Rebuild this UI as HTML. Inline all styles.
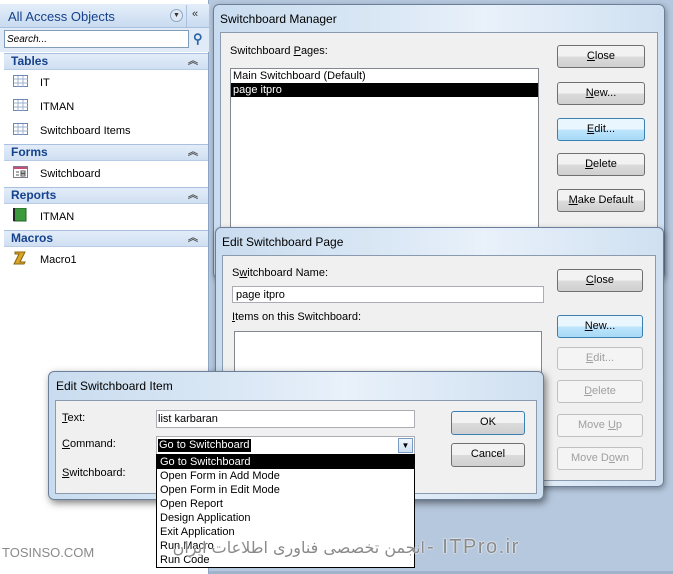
<!DOCTYPE html>
<html><head><meta charset="utf-8"><style>
*{box-sizing:border-box;margin:0;padding:0}
body{width:673px;height:574px;overflow:hidden;background:#b6c8de;font-family:"Liberation Sans",sans-serif;font-size:11px;color:#000;position:relative}
.a{position:absolute;white-space:nowrap}
.nav{left:0;top:0;width:209px;height:574px;background:#fff;border-right:1px solid #8ea6c6}
.sec{left:4px;width:204px;height:17px;background:linear-gradient(#e3edf9,#cfdff2);border-top:1px solid #a9c0df;border-bottom:1px solid #b9cce6;color:#15428b;font-weight:bold;font-size:12px;padding-left:7px;line-height:15px}
.sec span{position:absolute;right:10px;font-size:10px;color:#555}
.it{left:40px;font-size:11px}
.dlg{background:linear-gradient(90deg,#c9dcef,#dbe8f5 40%,#e9f1fa 60%,#cfe0f1);border:1px solid #6b7f99;border-radius:6px;box-shadow:1px 2px 6px rgba(0,0,0,.35)}
.pan{background:#f0f0f0;border:1px solid #8a9bb0}
.btn{width:88px;height:23px;border:1px solid #707070;border-radius:3px;background:linear-gradient(#f2f2f2 50%,#dcdcdc 50%,#cfcfcf);text-align:center;line-height:21px;font-size:11px}
.btn.h{border-color:#3c7fb1;background:linear-gradient(#eaf6fd 50%,#bee6fd 50%,#a7d9f5)}
.btn.d{color:#a0a0a0;border-color:#c0c0c0;background:#f4f4f4}
.inp{background:#fff;border:1px solid #abadb3}
u{text-decoration:underline}
.wm{color:rgba(125,125,125,.9);text-shadow:0 0 1px #fff,0 0 2px #fff;z-index:5}
</style></head><body>
<div class="a nav"></div>
<div class="a" style="left:0;top:4px;width:209px;height:24px;background:linear-gradient(#e4eef9,#c9dbf0);border-bottom:1px solid #a9c0df"></div>
<div class="a" style="left:8px;top:9px;font-size:13px;color:#15428b">All Access Objects</div>
<div class="a" style="left:170px;top:9px;width:13px;height:13px;border-radius:50%;background:#dfe8f3;border:1px solid #8fa6c4;font-size:7px;text-align:center;line-height:11px;color:#333">▼</div>
<div class="a" style="left:186px;top:5px;width:1px;height:22px;background:#a9c0df"></div>
<div class="a" style="left:192px;top:8px;font-size:11px;color:#333">«</div>
<div class="a" style="left:0;top:28px;width:209px;height:24px;background:#e0ebf7"></div>
<div class="a inp" style="left:4px;top:30px;width:185px;height:18px;border-color:#7f9db9"></div>
<div class="a" style="left:7px;top:34px;font-style:italic;font-size:10px;color:#000">Search...</div>
<div class="a" style="left:193px;top:31px;font-size:13px;color:#2a64a8;font-weight:bold">⚲</div>
<div class="a sec" style="top:53px">Tables<span>︽</span></div>
<div class="a sec" style="top:144px">Forms<span>︽</span></div>
<div class="a sec" style="top:187px">Reports<span>︽</span></div>
<div class="a sec" style="top:230px">Macros<span>︽</span></div>
<svg class="a" style="left:13px;top:75px" width="16" height="64"><g fill="#fff" stroke="#6a87b5"><rect x=".5" y=".5" width="14" height="11"/><rect x=".5" y="24.5" width="14" height="11"/><rect x=".5" y="48.5" width="14" height="11"/></g><g stroke="#9eb2d0"><path d="M1 4h14M1 8h14M5 1v11M10 1v11M1 28h14M1 32h14M5 25v11M10 25v11M1 52h14M1 56h14M5 49v11M10 49v11"/></g></svg>
<div class="a it" style="top:77px">IT</div>
<div class="a it" style="top:101px">ITMAN</div>
<div class="a it" style="top:125px">Switchboard Items</div>
<svg class="a" style="left:13px;top:166px" width="16" height="13"><rect x=".5" y=".5" width="14" height="11" fill="#fff" stroke="#7a7a8a"/><rect x="1" y="1" width="13" height="2" fill="#c64f7a"/><path d="M3 6h3M3 9h3M8 5h4v2h-4zM8 8h4v2h-4z" stroke="#555" fill="none"/></svg>
<div class="a it" style="top:168px">Switchboard</div>
<svg class="a" style="left:13px;top:208px" width="14" height="14"><rect x="1" y="0" width="12" height="13" fill="#3c9a3c" stroke="#245f24"/><path d="M1 0v13" stroke="#222" stroke-width="2"/></svg>
<div class="a it" style="top:211px">ITMAN</div>
<svg class="a" style="left:13px;top:251px" width="14" height="14"><path d="M2 1h10l-5 10h5l-1 2H1l5-10H2z" fill="#d9a62a" stroke="#8a6410"/></svg>
<div class="a it" style="top:254px">Macro1</div>

<!-- Switchboard Manager -->
<div class="a dlg" style="left:213px;top:4px;width:452px;height:275px"></div>
<div class="a" style="left:220px;top:12px;font-size:12px">Switchboard Manager</div>
<div class="a pan" style="left:220px;top:32px;width:438px;height:240px"></div>
<div class="a" style="left:230px;top:45px">Switchboard <u>P</u>ages:</div>
<div class="a inp" style="left:230px;top:68px;width:309px;height:170px;border-color:#828790"></div>
<div class="a" style="left:233px;top:70px">Main Switchboard (Default)</div>
<div class="a" style="left:231px;top:83px;width:307px;height:14px;background:#000;color:#fff;padding-left:2px;line-height:14px">page itpro</div>
<div class="a btn" style="left:557px;top:45px"><u>C</u>lose</div>
<div class="a btn" style="left:557px;top:82px"><u>N</u>ew...</div>
<div class="a btn h" style="left:557px;top:118px"><u>E</u>dit...</div>
<div class="a btn" style="left:557px;top:153px"><u>D</u>elete</div>
<div class="a btn" style="left:557px;top:189px"><u>M</u>ake Default</div>

<!-- Edit Switchboard Page -->
<div class="a dlg" style="left:215px;top:227px;width:449px;height:260px"></div>
<div class="a" style="left:222px;top:235px;font-size:12px">Edit Switchboard Page</div>
<div class="a pan" style="left:222px;top:255px;width:434px;height:226px"></div>
<div class="a" style="left:232px;top:267px">S<u>w</u>itchboard Name:</div>
<div class="a inp" style="left:232px;top:286px;width:312px;height:17px"></div>
<div class="a" style="left:236px;top:289px">page itpro</div>
<div class="a" style="left:232px;top:311px"><u>I</u>tems on this Switchboard:</div>
<div class="a inp" style="left:234px;top:331px;width:308px;height:140px;border-color:#828790"></div>
<div class="a btn" style="left:557px;top:269px;width:86px"><u>C</u>lose</div>
<div class="a btn h" style="left:557px;top:315px;width:86px"><u>N</u>ew...</div>
<div class="a btn d" style="left:557px;top:347px;width:86px"><u>E</u>dit...</div>
<div class="a btn d" style="left:557px;top:380px;width:86px"><u>D</u>elete</div>
<div class="a btn d" style="left:557px;top:414px;width:86px">Move <u>U</u>p</div>
<div class="a btn d" style="left:557px;top:447px;width:86px">Move D<u>o</u>wn</div>

<!-- Edit Switchboard Item -->
<div class="a dlg" style="left:48px;top:371px;width:496px;height:129px;box-shadow:2px 3px 8px rgba(0,0,0,.5)"></div>
<div class="a" style="left:56px;top:379px;font-size:12px">Edit Switchboard Item</div>
<div class="a pan" style="left:55px;top:400px;width:482px;height:94px"></div>
<div class="a" style="left:62px;top:412px"><u>T</u>ext:</div>
<div class="a inp" style="left:156px;top:410px;width:259px;height:18px"></div>
<div class="a" style="left:158px;top:413px">list karbaran</div>
<div class="a" style="left:62px;top:438px"><u>C</u>ommand:</div>
<div class="a inp" style="left:156px;top:436px;width:259px;height:19px"></div>
<div class="a" style="left:158px;top:439px;background:#000;color:#fff;padding:0 1px;line-height:13px">Go to Switchboard</div>
<div class="a" style="left:398px;top:438px;width:15px;height:15px;border:1px solid #7a9cc4;background:linear-gradient(#f0f6fc,#cfe0f2);font-size:8px;text-align:center;line-height:13px">▼</div>
<div class="a" style="left:62px;top:467px"><u>S</u>witchboard:</div>
<div class="a btn h" style="left:451px;top:411px;width:74px;height:24px;background:linear-gradient(#f2f2f2 50%,#dcdcdc 50%,#cfcfcf)">OK</div>
<div class="a btn" style="left:451px;top:443px;width:74px;height:24px">Cancel</div>

<div class="a" style="left:156px;top:454px;width:259px;height:114px;background:#fff;border:1px solid #000;line-height:14px">
<div style="background:#000;color:#fff;padding-left:3px">Go to Switchboard</div>
<div style="padding-left:3px">Open Form in Add Mode</div>
<div style="padding-left:3px">Open Form in Edit Mode</div>
<div style="padding-left:3px">Open Report</div>
<div style="padding-left:3px">Design Application</div>
<div style="padding-left:3px">Exit Application</div>
<div style="padding-left:3px">Run Macro</div>
<div style="padding-left:3px">Run Code</div>
</div>
<div class="a" style="left:209px;top:571px;width:464px;height:3px;background:#9fb3cc"></div>

<!-- watermark -->
<div class="a wm" style="left:2px;top:545px;font-size:13px">TOSINSO.COM</div>
<div class="a wm" style="left:150px;top:538px;width:275px;text-align:right;font-size:16px;font-family:'DejaVu Sans',sans-serif;direction:rtl;overflow:hidden">انجمن تخصصی فناوری اطلاعات ایران</div>
<div class="a wm" style="left:427px;top:536px;font-size:20px;font-family:'Liberation Sans',sans-serif;letter-spacing:1.5px">- ITPro.ir</div>
</body></html>
